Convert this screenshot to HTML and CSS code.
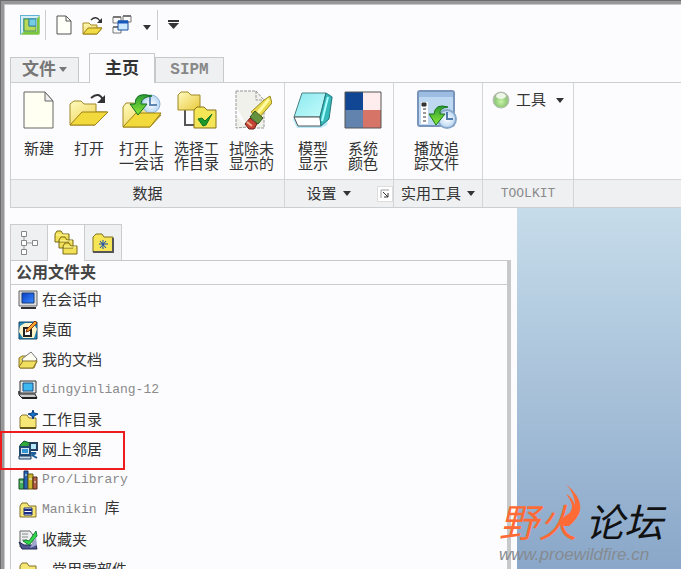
FILE: index.html
```html
<!DOCTYPE html>
<html lang="zh-CN">
<head>
<meta charset="utf-8">
<title>主页</title>
<link rel="stylesheet" href="styles.css">
</head>
<body>
<svg class="defs" aria-hidden="true">
  <defs>
    <linearGradient id="gold" x1="0" y1="0" x2="1" y2="1"><stop offset="0" stop-color="#fffbc0"/><stop offset="1" stop-color="#e9c93b"/></linearGradient>
    <linearGradient id="leaf" x1="0" y1="0" x2="0" y2="1"><stop offset="0" stop-color="#2a9a34"/><stop offset="1" stop-color="#8dea35"/></linearGradient>
    <linearGradient id="aqua" x1="0" y1="0" x2="1" y2="1"><stop offset="0" stop-color="#8ce9ef"/><stop offset="1" stop-color="#c4fbfb"/></linearGradient>
    <radialGradient id="ball" cx=".5" cy=".6" r=".55"><stop offset="0" stop-color="#c9f3a8"/><stop offset=".65" stop-color="#93cc7a"/><stop offset="1" stop-color="#a9b5a4"/></radialGradient>
    <radialGradient id="dial"><stop offset="0" stop-color="#fff"/><stop offset="1" stop-color="#b7d5f2"/></radialGradient>
    <linearGradient id="screen" x1="0" y1="0" x2="1" y2="1"><stop offset="0" stop-color="#0b3dc4"/><stop offset="1" stop-color="#3a8bff"/></linearGradient>
  </defs>
</svg>
<div class="window">
  <header class="quick">
    <button class="tool" aria-label="应用程序"><svg width="20" height="20" viewBox="0 0 20 20"><rect width="20" height="20" rx="2" fill="#9bd07c"/><path d="M0 0h20L0 20z" fill="#5fb3d6"/><path d="M1 1h18L17 3H3v14l-2 2z" fill="#d7eef5"/><path d="M19 2v17H2l3-2h12V4z" fill="#7cc63d"/><path d="M4 4h13v12H4z" fill="#fff"/><path d="M4 4h5v7h7v5H4z" fill="#b7d957" stroke="#4b9155"/><path d="M9 4h7v7H9z" fill="#75cce4" stroke="#3687a3"/></svg></button>
    <span class="rule"></span>
    <button class="tool new" aria-label="新建"><svg width="16" height="20" viewBox="0 0 16 20"><path d="M1 1h9l5 5v13H1z" fill="#fffffa" stroke="#555"/><path d="M10 1v5h5" fill="none" stroke="#555"/></svg></button>
    <button class="tool" aria-label="打开"><svg width="22" height="20" viewBox="0 0 22 20"><path d="M1 19V8h6l2 2h6v3h5l-5 6z" fill="url(#gold)" stroke="#a68b20"/><path d="M1 19l5-6h14l-5 6z" fill="#f2dc45" stroke="#9a7f18"/><path d="M9 5q5-5 9 1" fill="none" stroke="#333" stroke-width="1.3"/><path d="M20 3v5h-5z" fill="#333"/></svg></button>
    <button class="tool" aria-label="窗口"><svg width="20" height="20" viewBox="0 0 20 20"><g fill="#fafafa" stroke="#777"><path d="M1 2h8v6H1zM11 1h8v6h-8zM1 12h8v6H1z"/></g><path d="M1 2h8M11 1h8M1 12h8" stroke="#777" stroke-width="2"/><path d="M6 6h10v9H6z" fill="#cce8ff" stroke="#164f9e"/><path d="M6 7h10" stroke="#1557b8" stroke-width="3"/></svg></button>
    <button class="tool more" aria-label="更多窗口"><span class="caret"></span></button>
    <span class="rule last"></span>
    <button class="tool" aria-label="自定义"><svg width="11" height="9" viewBox="0 0 11 9"><path d="M0 1h11" stroke="#333" stroke-width="2"/><path d="M0 3h11L5.500 9z" fill="#333"/></svg></button>
  </header>

  <nav class="tabs" aria-label="功能区">
    <button class="tab file">文件<span class="caret"></span></button>
    <button class="tab active">主页</button>
    <button class="tab latin">SIPM</button>
  </nav>

  <section class="ribbon">
    <div class="group data">
      <div class="commands">
        <button class="command"><svg width="40" height="40" viewBox="0 0 40 40"><path d="M5 2h21l8 9v27H5z" fill="#fffff2" stroke="#666"/><path d="M26 2v9h8z" fill="#eee" stroke="#666"/></svg><span>新建</span></button>
        <button class="command"><svg width="40" height="40" viewBox="0 0 40 40"><path d="M1 35V14l4-3h7l3 3h12v8h11L26 35z" fill="url(#gold)" stroke="#a18824"/><path d="M1 35l12-13h26L26 35z" fill="#f3da3c" stroke="#9d8115"/><path d="M22 8q8-7 12 2" fill="none" stroke="#333" stroke-width="2"/><path d="M36 5v8h-8z" fill="#333"/></svg><span>打开</span></button>
        <button class="command wide"><svg width="40" height="40" viewBox="0 0 40 40"><path d="M1 37V17l3-4h8l3 3h14v9h10L28 37z" fill="url(#gold)" stroke="#a18824"/><circle cx="29" cy="14" r="9" fill="url(#dial)" stroke="#8bb4da"/><path d="M28 7v8h7" fill="none" stroke="#5f87b3" stroke-width="2"/><path d="M1 37l13-14h25L28 37z" fill="#f3da3c" stroke="#9d8115"/><path d="M30 6Q13 1 13 14h-5l8 11 9-11h-6q0-7 11-8z" fill="url(#leaf)" stroke="#137025"/></svg><span>打开上<br>一会话</span></button>
        <button class="command wide"><svg width="40" height="40" viewBox="0 0 40 40"><path d="M8 20v15h11" fill="none" stroke="#555" stroke-width="2"/><path d="M1 20V5l3-3h7l3 3h9v15z" fill="url(#gold)" stroke="#a18824"/><path d="M17 38V20l3-3h7l3 3h9v18z" fill="#f4e557" stroke="#87701a"/><path d="M21 29l4-1 3 3 7-7-6 11-3 1z" fill="#1b9929" stroke="#117222"/></svg><span>选择工<br>作目录</span></button>
        <button class="command wide"><svg width="40" height="40" viewBox="0 0 40 40"><path d="M4 1h20l8 9v28H16L4 16z" fill="#f1f1ec"/><path d="M4 25l12 13H4z" fill="#f1f1ec"/><path d="M4 1h20l8 9v28h-9M24 1v9h8M4 1v37l12-1" fill="none" stroke="#999" stroke-dasharray="3 1"/><path d="M32 10l6-4 2 7-13 15-8-6z" fill="#e8d94c" stroke="#9a8922"/><path d="M37 9L25 24" stroke="#fff9a0" stroke-width="3"/><path d="M23 21l8 7-5 6-8-7z" fill="#65923e" stroke="#38561d"/><path d="M18 28l7 6-3 5h-5l-4-5z" fill="#c64334" stroke="#691f18"/><path d="M15 32l5 4" stroke="#f1b090" stroke-width="2"/></svg><span>拭除未<br>显示的</span></button>
      </div>
      <div class="caption">数据</div>
    </div>
    <div class="group settings">
      <div class="commands">
        <button class="command"><svg width="40" height="40" viewBox="0 0 40 40"><path d="M9 4h27l4 3-6 28-6 3H4l-4-8z" fill="#b8eafa"/><path d="M9 3h24l-6 24H1z" fill="url(#aqua)" stroke="#4a8185"/><path d="M1 27h26l1 9H5z" fill="#fff" stroke="#555"/><path d="M33 3l6 4-3 22-8 7-1-9z" fill="#35b9bb" stroke="#28777a"/><path d="M35 7l-6 24" stroke="#a9ffff" stroke-width="2"/></svg><span>模型<br>显示</span></button>
        <button class="command"><svg width="40" height="40" viewBox="0 0 40 40"><path d="M2 2h18v18H2z" fill="#104693"/><path d="M20 2h18v18H20z" fill="#ffeded"/><path d="M2 20h18v18H2z" fill="#6183ad"/><path d="M20 20h18v18H20z" fill="#d77468"/><path d="M2 2h36v36H2z" fill="none" stroke="#555"/></svg><span>系统<br>颜色</span></button>
      </div>
      <div class="caption">设置<span class="caret"></span><button class="launch" aria-label="设置选项"><svg width="10" height="10" viewBox="0 0 10 10"><path d="M1 9V1h8" fill="none" stroke="#999"/><path d="M3 3l5 5M8 4v4H4" fill="none" stroke="#333"/></svg></button></div>
    </div>
    <div class="group utility">
      <div class="commands">
        <button class="command wide"><svg width="40" height="40" viewBox="0 0 40 40"><rect x="1" y="1" width="36" height="35" rx="2" fill="#bed8f1" stroke="#7894bb" stroke-width="2"/><path d="M2 2h34v5H2z" fill="#9dbce2"/><path d="M4 12h7v22H4z" fill="#fff"/><path d="M5 13h4v3H5zM6 19h3m-3 4h3m-3 4h3m-3 4h3" fill="#333" stroke="#333"/><circle cx="30" cy="29" r="9" fill="url(#dial)" stroke="#89a8c9" stroke-width="2"/><path d="M30 22v7h6" fill="none" stroke="#527aaa" stroke-width="2"/><path d="M31 17Q18 13 17 24h-5l7 11 9-11h-5q-1-6 8-7z" fill="url(#leaf)" stroke="#18771c"/></svg><span>播放追<br>踪文件</span></button>
      </div>
      <div class="caption">实用工具<span class="caret"></span></div>
    </div>
    <div class="group toolkit">
      <div class="commands"><button class="menu"><svg width="18" height="18" viewBox="0 0 18 18"><circle cx="9" cy="9" r="8" fill="url(#ball)" stroke="#b9c0b7"/><ellipse cx="9" cy="5" rx="5" ry="3" fill="#edf7e7"/></svg>工具<span class="caret"></span></button></div>
      <div class="caption latin">TOOLKIT</div>
    </div>
    <div class="group rest"><div class="commands"></div><div class="caption"></div></div>
  </section>

  <main class="workspace">
    <aside class="navigator">
      <div class="side-tabs">
        <button class="side-tab" aria-label="模型树"><svg width="20" height="26" viewBox="0 0 20 26"><path d="M5 7v12M7 13h6" stroke="#999"/><g fill="#fff" stroke="#888"><path d="M2.500 1.500h5v5h-5zM2.500 10.500h5v5h-5zM2.500 19.500h5v5h-5zM13.500 10.500h5v5h-5z"/></g></svg></button>
        <button class="side-tab active" aria-label="文件夹浏览器"><svg width="24" height="26" viewBox="0 0 24 26"><g fill="#f2e057" stroke="#786817"><path d="M1 12V4l2-3h4l2 3h6v8zM5 18v-8l2-3h4l2 3h6v8zM9 24v-8l2-3h4l2 3h6v8z"/></g><path d="M10 17h12M6 11h12M2 5h12" stroke="#fff8a0"/></svg></button>
        <button class="side-tab" aria-label="收藏夹"><svg width="22" height="20" viewBox="0 0 22 20"><path d="M1 19V4l3-3h6l2 3h9v15z" fill="#f5e557" stroke="#80711c"/><path d="M1 19h20V5" fill="none" stroke="#555" stroke-width="2"/><path d="M11 7v9M7 11h9M8 8l6 7M14 8l-6 7" stroke="#1548b4"/></svg></button>
      </div>
      <div class="folders">
        <h2>公用文件夹</h2>
        <ul>
          <li><a href="#"><svg width="20" height="20" viewBox="0 0 20 20"><path d="M1 1h18v15H1z" fill="#dedede" stroke="#666"/><path d="M4 3h12v10H4z" fill="url(#screen)" stroke="#153b79"/><path d="M3 18h15" stroke="#333" stroke-width="2"/></svg>在会话中</a></li>
          <li><a href="#"><svg width="20" height="20" viewBox="0 0 20 20"><path d="M1 2h18v17H1z" fill="#218bbd" stroke="#174563"/><path d="M2 6l5-3h8l4 6-3 9H5l-4-6z" fill="#fff3c9"/><path d="M6 8h7v8H6z" fill="#fff" stroke="#222" stroke-width="2"/><path d="M17 1l2 2-8 8-3 1 1-3z" fill="#f5a62b" stroke="#8a351a"/></svg>桌面</a></li>
          <li><a href="#"><svg width="20" height="20" viewBox="0 0 20 20"><path d="M1 17V8l3-2h3l10 2 2 3-3 7H2z" fill="#e8d758" stroke="#8b7728"/><path d="M4 9l9-7 6 7-4 6H6z" fill="#fffff3" stroke="#777"/><path d="M1 17l4-6h14l-4 7H2z" fill="#f1df60" stroke="#8b7728"/></svg>我的文档</a></li>
          <li class="latin"><a href="#"><svg width="20" height="20" viewBox="0 0 20 20"><path d="M2 1h16v12H2z" fill="#e6e8e8" stroke="#333"/><path d="M5 3h10v8H5z" fill="#3eb9ef" stroke="#174e85"/><path d="M1 11v3h16l2 4H4l-3-3z" fill="#ccc" stroke="#222"/><path d="M4 18h15" stroke="#222" stroke-width="2"/></svg>dingyinliang-12</a></li>
          <li><a href="#"><svg width="20" height="20" viewBox="0 0 20 20"><path d="M2 18V7l2-2h5l2 3h7v10z" fill="#f5e676" stroke="#8b772a"/><path d="M2 18h16" stroke="#655718" stroke-width="2"/><path d="M15 0l1 3 4 1-4 2-1 3-1-3-4-2 4-1z" fill="#1872c5" stroke="#073b80"/></svg>工作目录</a></li>
          <li class="marked"><a href="#"><svg width="20" height="20" viewBox="0 0 20 20"><path d="M12 3h7v7h-7z" fill="#b5e9fa" stroke="#263f61" stroke-width="2"/><path d="M2 5l4-4 6 2-3 4H2z" fill="#31a83c" stroke="#145c30"/><path d="M2 7h10v8H2z" fill="#d8e5ef" stroke="#234b72" stroke-width="2"/><path d="M4 9h6v4H4z" fill="#3498d4"/><path d="M1 16h12v3H1z" fill="#ccd8e2" stroke="#173c66"/><path d="M13 13h5l-4 2 5 3" fill="none" stroke="#1d609a" stroke-width="2"/></svg>网上邻居</a></li>
          <li class="latin"><a href="#"><svg width="20" height="20" viewBox="0 0 20 20"><path d="M1 9h5v10H1z" fill="#45ae58" stroke="#164c25"/><path d="M6 1h4v18H6z" fill="#2764b4" stroke="#142f59"/><path d="M10 4h5v15h-5z" fill="#ccb82f" stroke="#635714"/><path d="M15 7h4v12h-4z" fill="#b26041" stroke="#58291a"/><path d="M2 12h3M7 5h2m2 4h3m2 3h2" stroke="#eee"/></svg>Pro/Library</a></li>
          <li class="latin"><a href="#"><svg width="20" height="20" viewBox="0 0 20 20"><path d="M2 17V6l2-3h5l2 3h7v11z" fill="#f5e676" stroke="#827128"/><path d="M6 8h8v7H6z" fill="#fff" stroke="#162974"/><path d="M6 10h8M6 13h8" stroke="#1c2c8b" stroke-width="2"/></svg><span>Manikin <b>库</b></span></a></li>
          <li><a href="#"><svg width="20" height="20" viewBox="0 0 20 20"><path d="M2 1h10l3 4v12H2z" fill="#edf0f0" stroke="#666"/><path d="M4 4h6M4 7h6M4 10h5" stroke="#888"/><path d="M1 12l5 3h12l1 4H4z" fill="#515993" stroke="#24294f"/><path d="M18 1l1 5-8 9-6-4 3-1 3 1z" fill="#30d749" stroke="#168234"/><path d="M18 7l1 8-7 3z" fill="#9fa7cf"/></svg>收藏夹</a></li>
          <li class="nested"><a href="#"><svg width="20" height="20" viewBox="0 0 20 20"><path d="M2 17V6l2-3h5l2 3h7v11z" fill="#f5e676" stroke="#827128"/></svg>常用零部件</a></li>
        </ul>
      </div>
    </aside>
    <div class="canvas"></div>
  </main>

  <div class="brand">
    <div class="brand-name"><span class="fire">野火</span><svg class="flame" width="24" height="44" viewBox="0 0 24 44"><path d="M7 0q20 17 12 31-2 5-9 11H5q-5-5 1-10 7-3 7-10-1-6-6-12 6 3 9 11Q16 10 7 0z" fill="#ff6a35"/></svg><span>论坛</span></div>
    <div class="address">www.proewildfire.cn</div>
  </div>
</div>
</body>
</html>
```
FILE: styles.css
```css
*, *::after { box-sizing: border-box; }
body {
  margin: 0;
  color: #333;
  font: 15px/16px "Liberation Sans", "Noto Sans CJK SC", sans-serif;
}
button {
  margin: 0;
  padding: 0;
  border: 0;
  background: none;
  color: inherit;
  font: inherit;
}
svg { display: block; flex: none; }
.defs { position: absolute; width: 0; height: 0; }
.window {
  position: relative;
  display: flex;
  flex-direction: column;
  height: 100vh;
  overflow: hidden;
  padding: 4px 0 0 5px;
  background: #fcfcfe;
  box-shadow: inset 1px 1px #6c6c6e, inset 4px 4px #98989a, inset 5px 5px #c8c8c8;
}
.caret {
  display: inline-block;
  border: 4px solid transparent;
  border-top: 5px solid #333;
  border-bottom: 0;
}
.latin {
  color: #8a8a8a;
  font-family: "Liberation Mono", "Noto Sans CJK SC", monospace;
  font-size: 13px;
}

.quick {
  display: flex;
  align-items: center;
  gap: 8px;
  height: 41px;
  padding-left: 15px;
  flex: none;
}
.rule { width: 1px; height: 30px; margin-left: -3px; background: #ccc; }
.new { margin: 0 2px; }
.more { margin: 0 3px; }
.rule.last { margin: 0 2px 0 -5px; }

.tabs {
  display: flex;
  align-items: flex-end;
  height: 37px;
  margin-left: 5px;
  padding-top: 8px;
  flex: none;
}
.tab {
  height: 25px;
  border: 1px solid #c6c8ca;
  border-bottom: 0;
  background: #eff0f2;
  font-size: 17px;
  font-weight: bold;
}
.file { width: 69px; margin-right: 10px; color: #777; }
.file .caret { margin: 0 0 3px 3px; border-top-color: #777; }
.tab.active {
  position: relative;
  z-index: 1;
  width: 66px;
  height: 30px;
  margin-bottom: -1px;
  background: #fcfcfe;
}
.tab.latin { width: 69px; color: #888; font-size: 16px; }

.ribbon {
  display: flex;
  margin-left: 5px;
  border: solid #cccfd1;
  border-width: 1px 0 1px 1px;
  flex: none;
}
.group { display: flex; flex-direction: column; border-right: 1px solid #d3d5d7; flex: none; }
.data { width: 274px; }
.settings { width: 109px; }
.utility { width: 89px; }
.toolkit { width: 91px; }
.rest { flex: 1; border: 0; }
.commands { display: flex; height: 96px; padding: 7px 3px 0; }
.command {
  display: flex;
  flex-direction: column;
  align-items: center;
  gap: 11px;
  width: 50px;
  line-height: 15px;
}
.command.wide { width: 55px; }
.utility .commands { padding-left: 15px; }
.menu { display: flex; align-items: center; gap: 6px; height: 20px; padding-left: 6px; }
.menu .caret { margin-left: 4px; }
.caption {
  display: flex;
  align-items: center;
  justify-content: center;
  gap: 6px;
  height: 28px;
  border-top: 1px solid #d3d5d7;
  background: #eff0f2;
}
.settings .caption { padding-left: 21px; }
.launch { margin: 0 0 0 20px; padding: 2px; border: 1px solid #ddd; background: #fff; }

.workspace { display: flex; flex: 1; min-height: 0; }
.navigator { width: 512px; flex: none; padding: 16px 6px 0 5px; }
.canvas { flex: 1; background: linear-gradient(#c6dcea, #8aa7c9); }
.side-tabs { display: flex; }
.side-tab {
  display: flex;
  align-items: center;
  justify-content: center;
  width: 38px;
  height: 36px;
  border: 1px solid #ccc;
  border-bottom: 0;
  background: #eff0f2;
}
.side-tab + .side-tab { width: 37px; border-left: 0; }
.side-tab.active { position: relative; height: 37px; margin-bottom: -1px; background: #fcfcfe; }
.folders { border: 1px solid #c6c8ca; border-right: 4px solid #c6c8ca; }
h2 {
  margin: 0;
  padding: 0 5px;
  border-bottom: 1px solid #ccc;
  color: #444;
  font-size: 16px;
  line-height: 23px;
}
ul { margin: 0; padding: 0; list-style: none; }
li { position: relative; }
li a {
  display: flex;
  align-items: center;
  gap: 4px;
  height: 30px;
  padding-left: 7px;
  color: #333;
  text-decoration: none;
}
li.latin a { color: #8a8a8a; }
li b { color: #333; font-size: 15px; font-weight: normal; }
.nested a { gap: 14px; }
.marked::after {
  content: "";
  position: absolute;
  top: -4px;
  left: -11px;
  width: 125px;
  height: 39px;
  border: 2px solid #ee1c1c;
}

.brand { position: absolute; right: 18px; bottom: 5px; color: #111; font-style: italic; }
.brand-name {
  position: relative;
  display: flex;
  gap: 8px;
  font-size: 39px;
  line-height: 44px;
}
.brand-name .fire { color: #ff6a35; }
.flame { position: absolute; top: -18px; left: 60px; }
.address { color: #858b91; font: italic 17px/18px "Liberation Sans", sans-serif; }
```
